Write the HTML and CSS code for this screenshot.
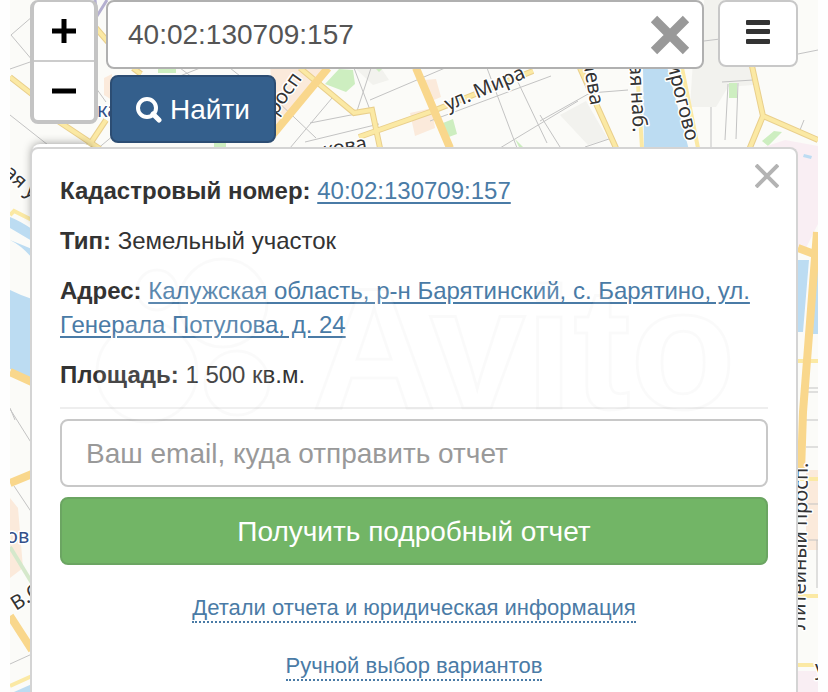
FILE: index.html
```html
<!DOCTYPE html>
<html lang="ru">
<head>
    <meta charset="UTF-8">
    <meta name="viewport" content="width=device-width, initial-scale=1.0">
    <title>Кадастровая карта</title>
    <link rel="stylesheet" href="styles.css">
</head>
<body>
    <main class="map">
        <svg class="map-canvas" viewBox="10 0 808 692" preserveAspectRatio="xMidYMin slice" aria-hidden="true">
            <rect x="10" y="0" width="808" height="692" fill="#fbfbf8"/>

            <!-- blocks -->
            <g fill="#f2f2ee">
                <path d="M704 0h20v60h-20zM694 45l62 0 -3 40 -25 2 -12 20 -26 0zM560 115l26 -14 22 38 -20 6z"/>
                <path d="M355 68h26l8 12 -16 5z"/>
            </g>
            <g fill="#fbeadb">
                <path d="M270 66h62l-56 62zM410 113l22 -5 3 20 -20 8zM424 80l12 -1 5 18 -12 5zM104 78l8 -4v26l-8 -5zM10 498l8 10 5 60 -13 10zM806 470h12v80h-12z"/>
            </g>
            <g fill="#cdeec0">
                <path d="M325 84l14 -15 14 1 2 14 -9 8zM443 123l10 -4 4 15 -11 4zM729 83h8v15h-8zM158 68h18v5h-18zM762 141l12 -10 8 1 -14 14zM812 195l6 2v14l-8 -3zM375 68h8l-4 4zM515 139l8 8h-4zM214 143h12v6h-12z"/>
            </g>
            <path fill="#f9eef3" d="M755 150l30 -10 33 6v78l-12 24 -22 -6zM798 671h20v21h-20z"/>

            <!-- water -->
            <g fill="#bcdcf2">
                <path d="M643 66h24l22 84h-45zM10 217q10 4 22 12v12l-22 -13zM10 240l22 9v9q-10 -12 -22 -18zM10 290q10 5 22 9v80l-22 -10zM798 260h11l-6 72h-5zM812 270l6 -10v74h-11zM804 154l8 2 -1 3 -8 -2zM32 684v8h-18z"/>
            </g>

            <!-- minor streets -->
            <g fill="none" stroke="#c3c3c3" stroke-width="1">
                <path d="M33 16l-22 19 22 26 -23 8M96 88l10 14M10 115l38 30M96 150l60 -50M170 80l30 -12M180 68l16 12M230 68l10 8"/>
                <path d="M276 100l40 38M354 68l16 42 9 32M370 100l75 -32M310 123l46 -9 16 -49M305 142l74 -18M290 148l42 -50M487 68l30 80M430 121l121 -45M517 80l30 63M500 148l78 -47"/>
                <path d="M540 121l50 -28 38 -3M540 115l20 32M585 147l24 -8M704 41l16 -2M798 54l20 -4M722 82l31 -2M728 84l-3 56M738 83l-2 56M711 107v42M800 130l4 -10"/>
                <path d="M10 409l22 35M14 486l18 27M10 664l22 -10M10 408l5 12M806 420h12M806 447h12M806 388h12M806 392h12M806 504h12M806 540h12M817 540v48"/>
            </g>

            <!-- main roads, outline and fill -->
            <g fill="none" stroke="#e9cf8c" stroke-width="6">
                <path d="M10 77l23 18M58 121l42 28M106 120l-20 30M96 28l12 14M133 68l8 6M580 68l36 80M752 66l11 50 -14 34M763 116l55 24M300 68l54 45 18 -3 8 38M359 137l74 -26 100 -40"/>
            </g>
            <g fill="none" stroke="#fbe9a4" stroke-width="4">
                <path d="M10 77l23 18M58 121l42 28M106 120l-20 30M96 28l12 14M133 68l8 6M580 68l36 80M637 68l5 80M682 68l16 80M752 66l11 50 -14 34M763 116l55 24M300 68l54 45 18 -3 8 38M359 137l74 -26 100 -40"/>
                <path d="M10 215l4 -4 18 9M10 686l22 -10M798 361h20M798 479h20M798 596h20M798 665h20"/>
            </g>
            <g fill="none" stroke="#f9d78c" stroke-width="8">
                <path d="M270 138l58 -70M416 68l34 80M10 372l22 10M10 483l22 -9M10 616l22 34M817 232l-14 180 -2 60M798 248l16 6"/>
            </g>
            <path fill="none" stroke="#b4afd0" stroke-width="3" d="M95 0l2 16 10 -16M38 2h18"/>
            <path fill="none" stroke="#d5e8cb" stroke-width="4" d="M10 547l22 36"/>

            <!-- labels -->
            <g class="map-labels">
                <text transform="translate(448 111) rotate(-23)">ул. Мира</text>
                <text transform="translate(276 116) rotate(-55)">росп</text>
                <text transform="translate(324 157) rotate(-10)">кова</text>
                <text transform="translate(583 62) rotate(80)">аева</text>
                <text transform="translate(629 54) rotate(87)">кая наб.</text>
                <text transform="translate(667 64) rotate(76)">ирогово</text>
                <text transform="translate(3 174) rotate(42)">ая у</text>
                <text transform="translate(16 611) rotate(-32)">В.О</text>
                <text transform="translate(805 630) rotate(-89)">Литейный просп.</text>
                <text x="815" y="675">у</text>
                <text class="map-metro" x="97" y="117">ка</text>
                <text class="map-metro" x="6" y="543">ов</text>
            </g>
        </svg>

        <div class="toolbar">
            <div class="zoom">
                <button class="zoom-button" type="button" aria-label="Приблизить">
                    <svg width="24" height="24" viewBox="0 0 24 24" stroke="#000" stroke-width="5">
                        <path d="M0 12h24M12 0v24"/>
                    </svg>
                </button>
                <button class="zoom-button" type="button" aria-label="Отдалить">
                    <svg width="24" height="24" viewBox="0 0 24 24" stroke="#000" stroke-width="5">
                        <path d="M0 12h24"/>
                    </svg>
                </button>
            </div>

            <form class="search">
                <div class="search-box">
                    <input class="search-input" type="text" aria-label="Кадастровый номер или адрес" value="40:02:130709:157">
                    <button class="search-clear" type="button" aria-label="Очистить">
                        <svg width="40" height="40" viewBox="0 0 40 40" stroke="#999" stroke-width="9">
                            <path d="M4 4l32 32M36 4L4 36"/>
                        </svg>
                    </button>
                </div>
                <button class="search-submit" type="button">
                    <svg width="26" height="26" viewBox="0 0 26 26" fill="none" stroke="#fff">
                        <circle cx="11" cy="11" r="9" stroke-width="4"/>
                        <path d="M17 17l6 6" stroke-width="5" stroke-linecap="round"/>
                    </svg>
                    Найти
                </button>
            </form>

            <button class="menu-button" type="button" aria-label="Меню">
                <svg width="24" height="24" viewBox="0 0 24 24" fill="#333">
                    <rect width="24" height="5" rx="1"/>
                    <rect y="9" width="24" height="5" rx="1"/>
                    <rect y="19" width="24" height="5" rx="1"/>
                </svg>
            </button>
        </div>

        <section class="panel">
            <button class="panel-close" type="button" aria-label="Закрыть">
                <svg width="24" height="24" viewBox="0 0 24 24" stroke="#b3b3b3" stroke-width="4">
                    <path d="M1 1l22 22M23 1L1 23"/>
                </svg>
            </button>

            <p><b>Кадастровый номер:</b> <a href="#">40:02:130709:157</a></p>
            <p><b>Тип:</b> Земельный участок</p>
            <p><b>Адрес:</b> <a href="#">Калужская область, р-н Барятинский, с. Барятино, ул. Генерала Потулова, д. 24</a></p>
            <p><b>Площадь:</b> 1 500 кв.м.</p>
            <hr>

            <form class="report">
                <input class="report-email" type="email" aria-label="Email" placeholder="Ваш email, куда отправить отчет">
                <button class="report-submit" type="button">Получить подробный отчет</button>
            </form>

            <nav class="panel-links">
                <a href="#">Детали отчета и юридическая информация</a>
                <a href="#">Ручной выбор вариантов</a>
            </nav>

            <svg class="watermark" viewBox="0 0 680 200" aria-hidden="true">
                <circle cx="85" cy="123" r="50"/>
                <circle cx="161" cy="54" r="44"/>
                <circle cx="95" cy="41" r="20"/>
                <circle cx="175" cy="134" r="32"/>
                <text x="250" y="159">Avito</text>
            </svg>
        </section>
    </main>
</body>
</html>
```

FILE: styles.css
```css
:root {
    --text-color: #333;
    --link-color: #4a7ba6;
    --primary-color: #345f8c;
    --success-color: #72b566;
    --border-color: #c8c8c8;
}

* {
    margin: 0;
    padding: 0;
    box-sizing: border-box;
}

body {
    font-family: "Liberation Sans", Arial, sans-serif;
    font-size: 24px;
    line-height: 34px;
    color: var(--text-color);
    background-color: #fefefe;
}

button,
input {
    font-family: inherit;
}

button {
    cursor: pointer;
}

button svg {
    display: block;
}

.map {
    position: relative;
    isolation: isolate;
    display: flex;
    flex-direction: column;
    gap: 4px;
    height: 100vh;
    margin: 0 10px;
    padding: 0 20px;
    overflow: hidden;
}

.map-canvas {
    position: absolute;
    top: 0;
    left: 0;
    z-index: -2;
    width: 100%;
    height: 100%;
}

.map-labels {
    font-family: "Noto Sans", sans-serif;
    font-size: 20px;
    fill: #333;
    stroke: #fff;
    stroke-width: 3px;
    stroke-linejoin: round;
    paint-order: stroke;
}

.map-metro {
    fill: #34508a;
}

/* Toolbar */
.toolbar {
    position: relative;
    display: flex;
    align-items: flex-start;
}

.zoom {
    width: 68px;
    border: 4px solid #c4c4c4;
    border-top-width: 2px;
    border-radius: 8px;
    background-color: #fff;
}

.zoom-button {
    display: flex;
    align-items: center;
    justify-content: center;
    width: 100%;
    height: 58px;
    border: none;
    background-color: transparent;
}

.zoom-button + .zoom-button {
    height: 60px;
    border-top: 2px solid #ccc;
}

.search {
    flex: 1;
    margin: 0 14px 0 8px;
}

.search-box {
    display: flex;
    align-items: center;
    height: 69px;
    padding: 0 12px 0 20px;
    border: 2px solid #b0b0b0;
    border-radius: 8px;
    background-color: #fff;
}

.search-input {
    flex: 1;
    min-width: 0;
    height: 100%;
    border: none;
    outline: none;
    background-color: transparent;
    font-size: 28px;
    color: #555;
}

.search-clear {
    border: none;
    background-color: transparent;
}

.search-submit {
    display: flex;
    align-items: center;
    justify-content: center;
    gap: 8px;
    width: 166px;
    height: 68px;
    margin: 6px 0 0 4px;
    padding-top: 2px;
    border: 2px solid #2c4d73;
    border-radius: 8px;
    background-color: var(--primary-color);
    font-size: 28px;
    color: #fff;
}

.menu-button {
    display: flex;
    align-items: center;
    justify-content: center;
    width: 80px;
    height: 67px;
    padding-bottom: 4px;
    border: 2px solid var(--border-color);
    border-radius: 8px;
    background-color: #fff;
}

/* Parcel panel */
.panel {
    position: relative;
    flex: 1;
    padding: 25px 28px 0;
    border: 2px solid #d4d4d4;
    border-bottom: none;
    border-radius: 8px 8px 0 0;
    background-color: #fff;
}

/* collapsed map control behind the panel */
.panel::before {
    content: '';
    position: absolute;
    top: -5px;
    left: 0;
    z-index: -1;
    width: 60px;
    height: 80px;
    border-radius: 8px;
    background-color: #fff;
    box-shadow: 0 0 10px rgba(0, 0, 0, 0.4);
}

.panel p {
    margin-bottom: 16px;
}

.panel a {
    color: var(--link-color);
    text-underline-offset: 3px;
}

.panel hr {
    margin: -1px 0 10px;
    border: none;
    border-top: 2px solid #eee;
}

.panel-close {
    position: absolute;
    top: 15px;
    right: 17px;
    border: none;
    background-color: transparent;
}

.report {
    display: grid;
    gap: 10px;
}

.report-email,
.report-submit {
    width: 100%;
    height: 68px;
    border: 2px solid var(--border-color);
    border-radius: 8px;
    font-size: 28px;
}

.report-email {
    padding: 2px 24px 0;
    background-color: #fff;
    color: #555;
}

.report-email::placeholder {
    color: #999;
    opacity: 1;
}

.report-submit {
    padding-top: 2px;
    border-color: #6ba562;
    background-color: var(--success-color);
    color: #fff;
}

.panel-links {
    display: flex;
    flex-direction: column;
    align-items: center;
    gap: 30px;
    padding-top: 30px;
    font-size: 22px;
    line-height: 26px;
}

.panel-links a {
    border-bottom: 2px dotted var(--link-color);
    text-decoration: none;
}

.watermark {
    position: absolute;
    top: 100px;
    left: 30px;
    width: 680px;
    max-width: 100%;
    fill: rgba(255, 255, 255, 0.1);
    stroke: rgba(0, 0, 0, 0.02);
    stroke-width: 3px;
    font-size: 172px;
    font-weight: bold;
    pointer-events: none;
}
```
